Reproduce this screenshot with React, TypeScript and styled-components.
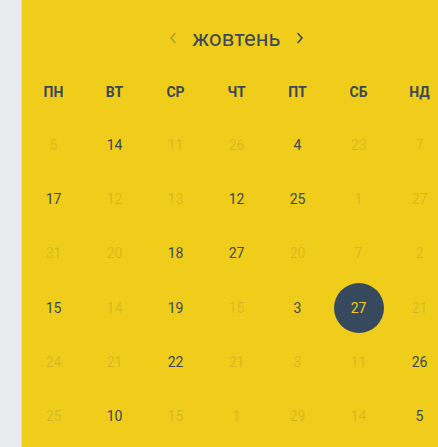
import React from "react";
import styled, { createGlobalStyle } from "styled-components";

const Global = createGlobalStyle`
  html, body { margin: 0; padding: 0; }
  body {
    width: 438px;
    height: 447px;
    overflow: hidden;
    background: #e7ebee;
    font-family: Roboto, "Noto Sans", "Liberation Sans", sans-serif;
  }
`;

const Page = styled.div`
  display: flex;
  height: 447px;
  width: 438px;
  overflow: hidden;
`;

const Side = styled.div`
  flex: 0 0 21px;
  background: #e7ebee;
  border-right: 1px solid #d9d6c4;
`;

const Panel = styled.div`
  flex: 0 0 425px;
  background: #f0cd1a;
  padding-top: 10px;
  padding-left: 1px;
  display: flex;
  flex-direction: column;
`;

const Header = styled.div`
  height: 56px;
  display: flex;
  align-items: center;
  justify-content: center;
  gap: 15px;
  color: #3b4859;
`;

const Month = styled.span`
  font-size: 22px;
  letter-spacing: 0.1px;
  line-height: 1;
  padding-top: 1px;
`;

const Arrow = styled.button<{ $faded?: boolean }>`
  border: 0;
  background: none;
  padding: 0;
  display: flex;
  color: ${(p) => (p.$faded ? "rgba(59,72,89,0.35)" : "#3b4859")};
`;

const Grid = styled.div`
  display: grid;
  grid-template-columns: repeat(7, 61px);
  grid-auto-rows: 54.2px;
`;

const WeekRow = styled(Grid)`
  grid-auto-rows: 52px;
`;

const WeekDay = styled.div`
  display: flex;
  align-items: center;
  justify-content: center;
  font-size: 14px;
  font-weight: 700;
  color: #3b4859;
`;

const Day = styled.div<{ $faded?: boolean; $selected?: boolean }>`
  display: flex;
  align-items: center;
  justify-content: center;
  font-size: 14px;
  color: ${(p) =>
    p.$selected ? "#f0cd1a" : p.$faded ? "rgba(59,72,89,0.16)" : "#3b4859"};
  & > span {
    width: 50px;
    height: 50px;
    border-radius: 50%;
    display: flex;
    align-items: center;
    justify-content: center;
    background: ${(p) => (p.$selected ? "#374a5d" : "transparent")};
  }
`;

const weekdays = ["ПН", "ВТ", "СР", "ЧТ", "ПТ", "СБ", "НД"];

type Cell = [number, number]; // value, 0 faded / 1 normal / 2 selected
const rows: Cell[][] = [
  [[5, 0], [14, 1], [11, 0], [26, 0], [4, 1], [23, 0], [7, 0]],
  [[17, 1], [12, 0], [13, 0], [12, 1], [25, 1], [1, 0], [27, 0]],
  [[31, 0], [20, 0], [18, 1], [27, 1], [20, 0], [7, 0], [2, 0]],
  [[15, 1], [14, 0], [19, 1], [15, 0], [3, 1], [27, 2], [21, 0]],
  [[24, 0], [21, 0], [22, 1], [21, 0], [3, 0], [11, 0], [26, 1]],
  [[25, 0], [10, 1], [15, 0], [1, 0], [29, 0], [14, 0], [5, 1]],
];

const Chevron = ({ dir }: { dir: "left" | "right" }) => (
  <svg width="8" height="12" viewBox="0 0 8 12">
    <polyline
      points={dir === "left" ? "6,1.5 2,6 6,10.5" : "2,1.5 6,6 2,10.5"}
      fill="none"
      stroke="currentColor"
      strokeWidth="1.6"
      strokeLinecap="round"
      strokeLinejoin="round"
    />
  </svg>
);

export default function App() {
  return (
    <>
      <Global />
      <Page>
        <Side />
        <Panel>
          <Header>
            <Arrow $faded aria-label="prev">
              <Chevron dir="left" />
            </Arrow>
            <Month>жовтень</Month>
            <Arrow aria-label="next">
              <Chevron dir="right" />
            </Arrow>
          </Header>
          <WeekRow>
            {weekdays.map((w) => (
              <WeekDay key={w}>{w}</WeekDay>
            ))}
          </WeekRow>
          <Grid>
            {rows.flat().map(([v, s], i) => (
              <Day key={i} $faded={s === 0} $selected={s === 2}>
                <span>{v}</span>
              </Day>
            ))}
          </Grid>
        </Panel>
      </Page>
    </>
  );
}
